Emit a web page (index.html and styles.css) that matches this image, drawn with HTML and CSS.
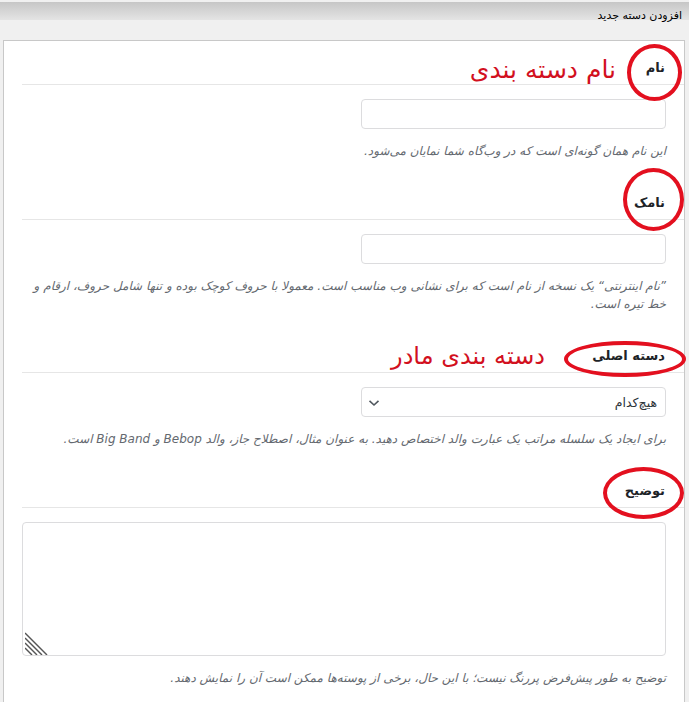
FILE: index.html
```html
<!DOCTYPE html>
<html lang="fa" dir="rtl">
<head>
<meta charset="utf-8">
<title>افزودن دسته جدید</title>
<link rel="stylesheet" href="styles.css">
</head>
<body>
<div class="topbar"><span class="topbar-title">افزودن دسته جدید</span></div>
<div class="panel">
  <div class="field">
    <h3 class="field-label">
      <span class="label-text">نام</span>
      <span class="mark mark-name"></span>
      <span class="note note-name">نام دسته بندی</span>
    </h3>
    <input class="text-input" type="text">
    <p class="help">این نام همان گونه‌ای است که در وب‌گاه شما نمایان می‌شود.</p>
  </div>
  <div class="field">
    <h3 class="field-label">
      <span class="label-text">نامک</span>
      <span class="mark mark-slug"></span>
    </h3>
    <input class="text-input" type="text">
    <p class="help">”نام اینترنتی“ یک نسخه از نام است که برای نشانی وب مناسب است. معمولا با حروف کوچک بوده و تنها شامل حروف، ارقام و خط تیره است.</p>
  </div>
  <div class="field">
    <h3 class="field-label">
      <span class="label-text">دسته اصلی</span>
      <span class="mark mark-parent"></span>
      <span class="note note-parent">دسته بندی مادر</span>
    </h3>
    <div class="select-wrap">
      <select class="select-input"><option>هیچ‌کدام</option></select>
      <svg class="chevron" width="12" height="8" viewBox="0 0 12 8"><path d="M1.5 1.8 L6 6 L10.5 1.8" fill="none" stroke="#50575e" stroke-width="1.6"/></svg>
    </div>
    <p class="help">برای ایجاد یک سلسله مراتب یک عبارت والد اختصاص دهید. به عنوان مثال، اصطلاح جاز، والد <span dir="ltr">Bebop</span> و <span dir="ltr">Big Band</span> است.</p>
  </div>
  <div class="field">
    <h3 class="field-label">
      <span class="label-text">توضیح</span>
      <span class="mark mark-desc"></span>
    </h3>
    <div class="textarea-wrap">
      <textarea class="text-area"></textarea>
      <svg class="resizer" width="23" height="23" viewBox="0 0 23 23"><g stroke="#555" stroke-width="1.4"><path d="M0 1 L22 23"/><path d="M0 6 L17 23"/><path d="M0 11 L12 23"/><path d="M0 16 L7 23"/></g></svg>
    </div>
    <p class="help">توضیح به طور پیش‌فرض پررنگ نیست؛ با این حال، برخی از پوسته‌ها ممکن است آن را نمایش دهند.</p>
  </div>
</div>
</body>
</html>
```
FILE: styles.css
```css
html, body {
  margin: 0;
  padding: 0;
}
body {
  background: #f0f0f0;
  font-family: "DejaVu Sans", "Noto Sans", sans-serif;
  color: #1d2327;
  width: 689px;
  overflow: hidden;
}
.topbar {
  height: 23px;
  padding: 9px 7px 0 0;
  background: #f0f0f0 linear-gradient(#c6c6c6, #e4e4e4) no-repeat 0 2px / 100% 18px;
  box-sizing: border-box;
}
.topbar-title {
  display: block;
  font-size: 11px;
  line-height: 14px;
  color: #000;
}
.panel {
  margin: 17px 4px 0 3px;
  border: 1px solid #c8c8c8;
  background: #fff;
  padding: 17px 0 30px 0;
}
.field-label {
  position: relative;
  margin: 0 0 14px 18px;
  padding: 0 19px 6px 0;
  border-bottom: 1px solid #e6e6e6;
  font-size: 13px;
  line-height: 20px;
  height: 20px;
  font-weight: bold;
  color: #1d2327;
}
.label-text {
  position: relative;
  z-index: 1;
}
.mark {
  position: absolute;
  border: 4px solid #e3101f;
  border-radius: 50%;
  box-sizing: border-box;
}
.mark-name { right: 2px; top: -14px; width: 55px; height: 57px; }
.mark-slug { right: 0; top: -25px; width: 61px; height: 63px; }
.mark-parent { right: -2px; top: -5px; width: 122px; height: 36px; }
.mark-desc { right: 0; top: -14px; width: 81px; height: 52px; }
.note {
  position: absolute;
  font-weight: normal;
  line-height: 30px;
  color: #d2101e;
  white-space: nowrap;
}
.note-name { right: 68px; top: -3px; font-size: 25px; }
.note-parent { right: 139px; top: -5px; font-size: 24px; }
.text-input {
  display: block;
  box-sizing: border-box;
  width: 305px;
  height: 30px;
  margin: 0 18px 0 0;
  border: 1px solid #dcdcde;
  border-radius: 4px;
  background: #fff;
  padding: 0 8px;
  font: 12px "DejaVu Sans", sans-serif;
}
.select-wrap {
  position: relative;
  width: 305px;
  height: 30px;
  margin-right: 18px;
}
.select-input {
  display: block;
  -webkit-appearance: none;
  appearance: none;
  box-sizing: border-box;
  width: 305px;
  height: 30px;
  border: 1px solid #dcdcde;
  border-radius: 4px;
  background: #fff;
  padding: 0 8px 0 24px;
  font: 12.5px "DejaVu Sans", sans-serif;
  color: #2c3338;
}
.chevron {
  position: absolute;
  left: 7px;
  top: 12px;
}
.textarea-wrap {
  position: relative;
  margin: 0 18px;
  height: 134px;
}
.text-area {
  display: block;
  box-sizing: border-box;
  width: 100%;
  height: 134px;
  border: 1px solid #dcdcde;
  border-radius: 4px;
  resize: none;
  margin: 0;
  background: #fff;
}
.resizer {
  position: absolute;
  left: 3px;
  bottom: 1px;
}
.help {
  margin: 13px 18px 33px;
  font-size: 12px;
  line-height: 18px;
  font-style: italic;
  color: #646970;
}
```
